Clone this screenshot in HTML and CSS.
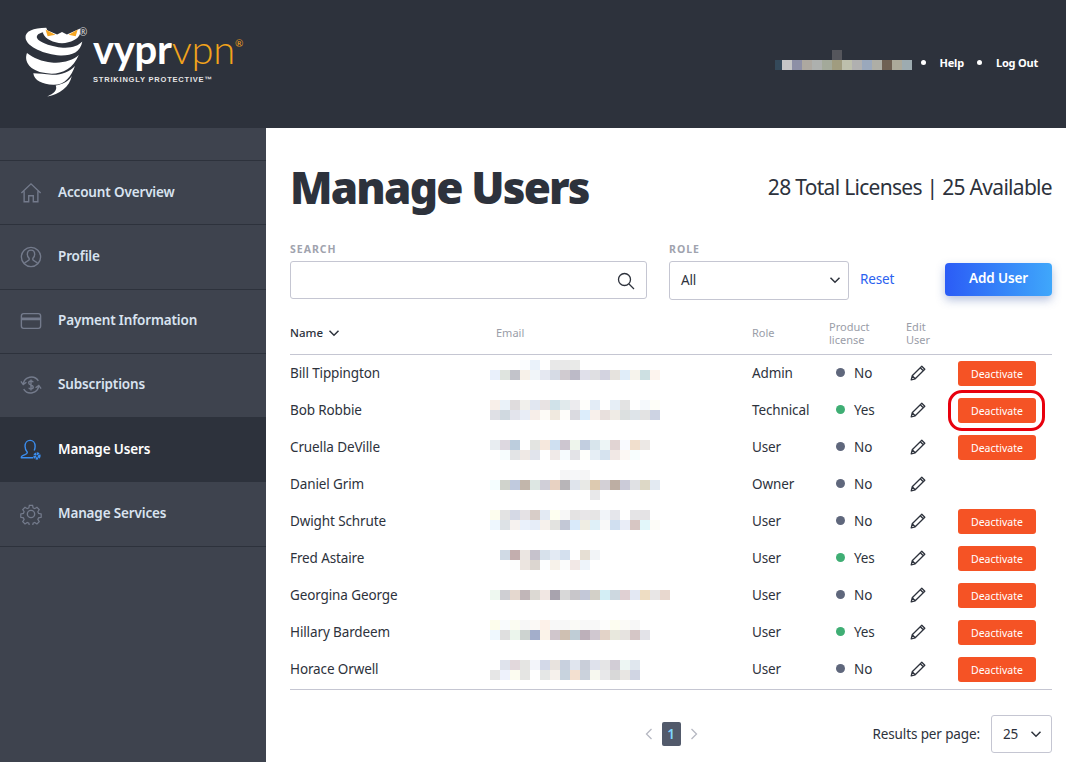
FILE: index.html
```html
<!DOCTYPE html>
<html lang="en">
<head>
    <meta charset="UTF-8">
    <meta name="viewport" content="width=device-width, initial-scale=1.0">
    <title>Manage Users</title>
    <link rel="stylesheet" href="styles.css">
</head>
<body>
    <svg class="sprites" aria-hidden="true">
        <symbol id="pencil" viewBox="0 0 16 16">
            <path d="M11.8 1.2l3 3L5.200 13.800l-4 1 1-4z M10.300 2.700l3 3 M2.200 10.800l3 3" fill="none" stroke="currentColor" stroke-width="1.300" stroke-linejoin="round"/>
        </symbol>
        <symbol id="chevron" viewBox="0 0 12 12">
            <path d="M1.500 3.800L6 8.200l4.500-4.400" fill="none" stroke="currentColor" stroke-width="1.500"/>
        </symbol>
    </svg>

    <header class="top-bar">
        <div class="logo">
            <svg class="logo-mark" viewBox="0 0 240 240">
                <path fill="#fff" d="M95 28C58 28 33 38 36 58c3 24 55 47 99 49 32 1 58-9 63-40-12 13-32 20-62 17-33-4-68-18-68-30 0-8 12-14 32-14z"/>
                <path fill="#fff" d="M40 100c-8 20 2 46 44 56 42 10 84-2 104-50-17 16-47 24-78 21-27-3-52-12-70-27z"/>
                <path fill="#fff" d="M58 158c2 20 26 32 57 33 32 1 52-24 62-54-15 17-40 26-65 25-21-1-38-4-54-4z"/>
                <path fill="#fff" d="M98 224c34-4 64-28 70-58-10 17-27 24-46 27 6 13-6 24-24 31z"/>
                <path fill="#fff" d="M86 30l40 17 14-7 14 7 38-17v14c-5 17-27 26-52 28-25-2-47-11-54-28z"/>
                <path fill="#f5a623" d="M93 33l28 15-22 4z M185 33l-26 15 20 4z"/>
            </svg>
            <span class="logo-reg">®</span>
            <div class="logo-words">
                <div class="logo-name">vypr<span class="logo-vpn">vpn</span><sup class="logo-sup">®</sup></div>
                <div class="logo-tag">STRIKINGLY PROTECTIVE™</div>
            </div>
        </div>
        <nav class="top-links">
            <div class="mosaic user-blur" id="userBlur"></div>
            <span class="dot"></span>
            <a href="#">Help</a>
            <span class="dot"></span>
            <a href="#">Log Out</a>
        </nav>
    </header>

    <div class="layout">
        <aside class="sidebar">
            <a class="side-item" href="#">
                <svg class="side-icon" viewBox="0 0 24 24"><path d="M1.500 12L12 2l10.500 10M4.500 10v11.500h5V15h5v6.500h5V10"/></svg>
                Account Overview
            </a>
            <a class="side-item" href="#">
                <svg class="side-icon" viewBox="0 0 24 24"><circle cx="12" cy="12" r="10.500"/><path d="M4.500 19.500c1-3 5-3 5.500-4.500v-1.500c-1.500-1-2-2.500-2-4.500 0-3 1.800-4.500 4-4.500s4 1.500 4 4.500c0 2-.5 3.500-2 4.500V15c.5 1.500 4.500 1.500 5.500 4.500"/></svg>
                Profile
            </a>
            <a class="side-item" href="#">
                <svg class="side-icon" viewBox="0 0 24 24"><rect x="1.500" y="4" width="21" height="16" rx="2.500"/><path d="M1.500 9h21M1.500 10.500h21"/></svg>
                Payment Information
            </a>
            <a class="side-item" href="#">
                <svg class="side-icon" viewBox="0 0 24 24"><path d="M3.500 11A9 9 0 0 1 20 7.500M20.500 13A9 9 0 0 1 4 16.500M1 8l2.500 3.500L7 9M17 15l3.500-2.500L23 16"/><path d="M14.500 9c-.5-1-1.500-1.300-2.500-1.300-1.500 0-2.500.8-2.500 2s1 1.800 2.500 2.300 2.500 1 2.500 2.300-1 2-2.500 2c-1 0-2-.4-2.500-1.300M12 6v12"/></svg>
                Subscriptions
            </a>
            <a class="side-item active" href="#">
                <svg class="side-icon" viewBox="0 0 24 24"><path d="M14.500 20.500H1.500c-.5-1.500 1-2.500 4-3.500 1.500-.5 2.500-1 2.500-2.500-1.500-1.500-2.500-3.500-2.500-6.500C5.500 4 8 1.500 11 1.500s5.500 2.500 5.500 6.500c0 1.500-.3 3-1 4.500"/><circle cx="18.500" cy="18.500" r="2.500" stroke-width="3" stroke-dasharray="2 .6"/></svg>
                Manage Users
            </a>
            <a class="side-item" href="#">
                <svg class="side-icon" viewBox="0 0 24 24"><circle cx="12" cy="12" r="4"/><path d="M10 1.500h4l.6 3.100 2 .9 2.700-1.700 2.800 2.800-1.700 2.700.9 2 3.200.7v4l-3.200.7-.9 2 1.700 2.700-2.800 2.800-2.700-1.700-2 .9-.6 3.100h-4l-.6-3.100-2-.9-2.700 1.700-2.800-2.800 1.700-2.700-.9-2-3.200-.7v-4l3.200-.7.9-2-1.700-2.700 2.800-2.800 2.700 1.700 2-.9z" transform="translate(1.300 1.300) scale(.89)"/></svg>
                Manage Services
            </a>
        </aside>

        <main class="content">
            <div class="title-row">
                <h1>Manage Users</h1>
                <div class="licenses">28 Total Licenses | 25 Available</div>
            </div>

            <div class="filters">
                <div class="field search-field">
                    <label>SEARCH</label>
                    <div class="control">
                        <svg class="search-icon" viewBox="0 0 18 18"><circle cx="7.500" cy="7.500" r="6"/><path d="M12 12l5 5"/></svg>
                    </div>
                </div>
                <div class="field role-field">
                    <label>ROLE</label>
                    <div class="control select">All<svg class="chev"><use href="#chevron"/></svg></div>
                </div>
                <a class="reset" href="#">Reset</a>
                <button class="add-user">Add User</button>
            </div>

            <div class="table-head">
                <div class="name-head">Name <svg class="chev"><use href="#chevron"/></svg></div>
                <div>Email</div>
                <div>Role</div>
                <div>Product<br>license</div>
                <div>Edit<br>User</div>
                <div></div>
            </div>

            <div class="rows">
                <div class="mosaic email-blur" id="emailBlur"></div>
                <div class="row">
                    <div>Bill Tippington</div><div></div><div>Admin</div>
                    <div class="license"><span class="bullet"></span>No</div>
                    <div><svg class="pencil"><use href="#pencil"/></svg></div>
                    <div><button class="deactivate">Deactivate</button></div>
                </div>
                <div class="row">
                    <div>Bob Robbie</div><div></div><div>Technical</div>
                    <div class="license"><span class="bullet on"></span>Yes</div>
                    <div><svg class="pencil"><use href="#pencil"/></svg></div>
                    <div class="marked"><button class="deactivate">Deactivate</button><span class="callout"></span></div>
                </div>
                <div class="row">
                    <div>Cruella DeVille</div><div></div><div>User</div>
                    <div class="license"><span class="bullet"></span>No</div>
                    <div><svg class="pencil"><use href="#pencil"/></svg></div>
                    <div><button class="deactivate">Deactivate</button></div>
                </div>
                <div class="row">
                    <div>Daniel Grim</div><div></div><div>Owner</div>
                    <div class="license"><span class="bullet"></span>No</div>
                    <div><svg class="pencil"><use href="#pencil"/></svg></div>
                    <div></div>
                </div>
                <div class="row">
                    <div>Dwight Schrute</div><div></div><div>User</div>
                    <div class="license"><span class="bullet"></span>No</div>
                    <div><svg class="pencil"><use href="#pencil"/></svg></div>
                    <div><button class="deactivate">Deactivate</button></div>
                </div>
                <div class="row">
                    <div>Fred Astaire</div><div></div><div>User</div>
                    <div class="license"><span class="bullet on"></span>Yes</div>
                    <div><svg class="pencil"><use href="#pencil"/></svg></div>
                    <div><button class="deactivate">Deactivate</button></div>
                </div>
                <div class="row">
                    <div>Georgina George</div><div></div><div>User</div>
                    <div class="license"><span class="bullet"></span>No</div>
                    <div><svg class="pencil"><use href="#pencil"/></svg></div>
                    <div><button class="deactivate">Deactivate</button></div>
                </div>
                <div class="row">
                    <div>Hillary Bardeem</div><div></div><div>User</div>
                    <div class="license"><span class="bullet on"></span>Yes</div>
                    <div><svg class="pencil"><use href="#pencil"/></svg></div>
                    <div><button class="deactivate">Deactivate</button></div>
                </div>
                <div class="row">
                    <div>Horace Orwell</div><div></div><div>User</div>
                    <div class="license"><span class="bullet"></span>No</div>
                    <div><svg class="pencil"><use href="#pencil"/></svg></div>
                    <div><button class="deactivate">Deactivate</button></div>
                </div>
            </div>

            <div class="table-foot">
                <div></div>
                <div class="pager">
                    <svg class="page-arrow" viewBox="0 0 8 12"><path d="M6.500 1L1.500 6l5 5"/></svg>
                    <span class="page-num">1</span>
                    <svg class="page-arrow" viewBox="0 0 8 12"><path d="M1.500 1l5 5-5 5"/></svg>
                </div>
                <div class="per-page">
                    Results per page:
                    <div class="control select small">25<svg class="chev"><use href="#chevron"/></svg></div>
                </div>
            </div>
        </main>
    </div>

    <script src="script.js"></script>
</body>
</html>
```

FILE: styles.css
```css
html, body {
    margin: 0;
    padding: 0;
    height: 100%;
    overflow: hidden;
}
body {
    font-family: "Noto Sans", "Open Sans", sans-serif;
    font-size: 13.500px;
    letter-spacing: -0.12px;
    color: #2d323c;
    background: #fff;
}
.sprites {
    display: none;
}

/* top bar */
.top-bar {
    height: 128px;
    background: #2d323c;
    display: flex;
    justify-content: space-between;
    align-items: flex-start;
}
.logo {
    display: flex;
    position: relative;
    padding: 18px 0 0 13px;
}
.logo-mark {
    width: 84px;
    height: 84px;
    flex: none;
}
.logo-reg {
    position: absolute;
    left: 79px;
    top: 27px;
    color: #d8d8d8;
    font-size: 10px;
    line-height: 10px;
}
.logo-words {
    margin-left: -4px;
    padding-top: 11px;
}
.logo-name {
    font-family: "Lato", sans-serif;
    font-size: 40px;
    font-weight: 700;
    line-height: 40px;
    color: #fff;
    letter-spacing: -0.3px;
    white-space: nowrap;
}
.logo-vpn {
    font-weight: 300;
    color: #f2a31b;
}
.logo-sup {
    font-size: 10px;
    font-weight: 400;
    color: #f2a31b;
    vertical-align: 17px;
    line-height: 0;
}
.logo-tag {
    font-family: "Liberation Sans", sans-serif;
    font-size: 7.500px;
    font-weight: 700;
    letter-spacing: 0.8px;
    color: #e6e6e6;
    margin-top: 6px;
    white-space: nowrap;
}
.top-links {
    display: flex;
    align-items: flex-start;
    padding: 50px 28px 0 0;
}
.top-links a {
    color: #fff;
    font-size: 11px;
    font-weight: 700;
    letter-spacing: -0.2px;
    line-height: 26px;
    text-decoration: none;
}
.dot {
    width: 5px;
    height: 5px;
    margin: 10px 13.500px 0;
    border-radius: 50%;
    background: #fff;
}
.mosaic {
    display: grid;
}
.user-blur {
    grid-template-columns: 7px repeat(13, 10px);
    grid-auto-rows: 10px;
    margin-right: -4px;
}

/* sidebar */
.layout {
    display: flex;
    height: 634px;
}
.sidebar {
    width: 266px;
    flex: none;
    background: #3e434e;
    padding-top: 32px;
    box-sizing: border-box;
}
.side-item {
    display: flex;
    align-items: center;
    height: 64.250px;
    box-sizing: border-box;
    padding: 0 0 2px 19.500px;
    border-top: 1px solid #2d323c;
    color: #d9e3f0;
    font-size: 13.500px;
    font-weight: 600;
    letter-spacing: -0.15px;
    text-decoration: none;
}
.side-item:last-child {
    border-bottom: 1px solid #2d323c;
    height: 65.250px;
}
.side-item.active {
    background: #2d323c;
    color: #fff;
}
.side-icon {
    width: 22px;
    height: 22px;
    margin: 2px 16.500px 0 0;
    flex: none;
    fill: none;
    stroke: #747b8c;
    stroke-width: 1.500;
}
.side-item.active .side-icon {
    stroke: #3b8ef0;
}

/* main area */
.content {
    flex: 1;
    padding: 29px 14px 0 24px;
}
.title-row {
    display: flex;
    justify-content: space-between;
    align-items: center;
    height: 60px;
}
h1 {
    margin: 0;
    font-size: 44px;
    font-weight: 900;
    letter-spacing: -1.800px;
    line-height: 60px;
    color: #2d323c;
}
.licenses {
    font-size: 21px;
    letter-spacing: -0.700px;
}
.filters {
    display: flex;
    align-items: flex-start;
    margin-top: 26px;
}
.field label {
    display: block;
    height: 12px;
    margin-bottom: 6px;
    font-size: 10.500px;
    line-height: 12px;
    font-weight: 700;
    letter-spacing: 1px;
    color: #a0a3ae;
}
.control {
    display: flex;
    align-items: center;
    height: 38px;
    box-sizing: border-box;
    background: #fff;
    border: 1px solid #c5c6d2;
    border-radius: 3px;
}
.search-field {
    width: 357px;
}
.search-icon {
    width: 18px;
    height: 18px;
    margin: 2px 11px 0 auto;
    fill: none;
    stroke: #2d323c;
    stroke-width: 1.300;
}
.role-field {
    width: 180px;
    margin-left: 22px;
}
.role-field .control {
    height: 39px;
    padding-bottom: 2px;
}
.select {
    justify-content: space-between;
    padding: 0 7px 0 11px;
}
.chev {
    width: 12px;
    height: 12px;
    color: #2d323c;
}
.reset {
    margin: 26px 0 0 11px;
    color: #2a62f0;
    font-size: 13.500px;
    line-height: 20px;
    text-decoration: none;
}
.add-user {
    margin: 20px 0 0 auto;
    width: 107px;
    height: 33px;
    padding: 0 0 4px;
    border: none;
    border-radius: 4px;
    background: linear-gradient(90deg, #2b5cf6, #3fa7fb);
    box-shadow: 0 4px 10px rgba(50, 80, 160, 0.35);
    color: #fff;
    font-family: inherit;
    font-size: 13.500px;
    letter-spacing: -0.1px;
    font-weight: 600;
}

/* user table */
.table-head, .row {
    display: grid;
    grid-template-columns: 206px 256px 77px 77px 52px 94px;
    align-items: center;
}
.table-head {
    height: 43px;
    margin-top: 12px;
    box-sizing: border-box;
    font-size: 11px;
    letter-spacing: 0;
    line-height: 13px;
    color: #9a9da8;
    border-bottom: 1px solid #c5c6d2;
    padding-bottom: 1px;
}
.name-head {
    color: #2d323c;
    font-size: 11.500px;
    font-weight: 500;
    display: flex;
    align-items: center;
    gap: 5px;
}
.rows {
    position: relative;
    padding-bottom: 1px;
    border-bottom: 1px solid #c5c6d2;
}
.email-blur {
    position: absolute;
    left: 200px;
    top: 5px;
    grid-template-columns: repeat(18, 10px);
    grid-auto-rows: 10px;
}
.row {
    height: 37px;
}
.row > div:not(:last-child) {
    margin-bottom: 2px;
}
.license {
    display: flex;
    align-items: center;
    padding-left: 7px;
}
.bullet {
    width: 9px;
    height: 9px;
    margin-right: 9px;
    border-radius: 50%;
    background: #5f677c;
}
.bullet.on {
    background: #3fae74;
}
.pencil {
    display: block;
    width: 16px;
    height: 16px;
    margin-left: 4px;
    color: #2d323c;
}
.deactivate {
    display: block;
    width: 78px;
    height: 25px;
    padding: 0;
    border: none;
    border-radius: 3px;
    background: #f55325;
    color: #fff;
    font-family: inherit;
    font-size: 10.500px;
}
.marked {
    position: relative;
}
.callout {
    position: absolute;
    left: -10px;
    top: -8px;
    width: 97px;
    height: 41px;
    box-sizing: border-box;
    border: 3px solid #e8000d;
    border-radius: 14px;
}
.table-foot {
    display: grid;
    grid-template-columns: 1fr auto 1fr;
    align-items: center;
    margin-top: 25px;
}
.pager {
    display: flex;
    align-items: center;
    gap: 9px;
}
.page-arrow {
    width: 8px;
    height: 12px;
    fill: none;
    stroke: #b6b8c2;
    stroke-width: 1.300;
}
.page-num {
    width: 19px;
    height: 24px;
    border-radius: 2px;
    background: #525a6b;
    color: #7fd6ff;
    font-weight: 600;
    text-align: center;
    line-height: 24px;
}
.per-page {
    display: flex;
    align-items: center;
    justify-content: flex-end;
    gap: 11px;
}
.select.small {
    width: 61px;
    padding: 0 9px 0 11px;
}
```

FILE: script.js
```js
// Redacted blocks are drawn as mosaics of flat cells, one string per line of cells
const userLines = [
    ',,,,,,55565c',
    '34495a,c5c5c6,8d8fa6,ada8a0,adb0ae,a3a99a,a09c7f,bdbfac,b0b0b0,9aa8bc,aeaea6,6f6053,aca99a,9dabb0'
];

const emailLines = {
    0: ',,,fbfdff,eaf2fa,,e8e8e8,e8e8e8,e9eae8',
    1: 'e9f0fb,dfe4df,c2c3ca,f7f1e9,f1f5f9,e5e8f1,d6dbe5,d0cbd0,bcbac7,e0e0ea,dfdfe2,d3d3e0,e6e3de,e0edf9,f6f3ec,cde0e2,fdf4ee',
    4: 'f8efe9,eaf2f9,dfdcdd,f1f0ec,e1e7f1,e8e3e3,d0e2e9,e1eaec,ecebee,fefefb,e3ecf6,,e6eef6,e3e3e3,,f5f9fc,fefef8',
    5: 'dfe0e5,d0d9e0,e3e4ec,e8edf6,f7eee9,fdfbf7,f0e9df,fefdfa,dadae0,dcedfb,f8f0eb,e8e0dd,efebe5,dce0e0,dee4e9,e3e3e3,cdd3e3',
    8: 'e8edf1,ddd8e0,bccddd,,e3e4e1,f6e8dd,cfe0f1,cdc6d0,eef5ec,c2cee0,d8e5ec,edf5f6,e1d4d3,f9faff,f1dfcd,ece8e5',
    9: ',f7fdfe,e3e4e6,efe9e5,e1e4ec,,f0eae8,f6fbfe,e3e3e7,fefffb,e6eef5,d6e3ef,f1e8e5,fcf8f4,f8fefe',
    11: ',,,,,,,f5f5f6,f6f7f9,f5f5f6',
    12: 'f5feff,d0d3cc,c0cade,c2b6ab,dde7e3,d0cfd8,e8d2c2,b8b5b8,dfe4ec,e8e9e6,ddcab0,d3d0d6,bdaea3,cbcbd8,e0e1e4,ddd8c6,e3eaf2',
    13: ',,,,,,,,,,e8e8ea',
    15: 'fdfdee,e3e3e3,d5d9e5,e5e2e5,d8cdc8,e3eaf3,fefff0,f7f7f7,e4e3e3,e8e6e8,e6e5e5,f1f4f9,e5e6eb,,e5e4e6,e4e3e5',
    16: 'eef7fe,dde2e6,f6f2ef,eaf1fb,e6edf8,f6f1ec,e3e3e0,c3c8d6,d9eafa,efede3,dff0f8,f9f9f9,d0dff0,e9edf7,d7c6c3,e2f7fa,fdfcf8',
    19: ',d0dae5,c3aeae,ebe6e2,c6c2cc,d7e1eb,e3eaf3,d4e0ee,,e6dfd4,f2f4f7',
    20: ',,fcfdfd,ece5e0,dcd6d0,fcfeff,f7f2ea,fbfcfc,f2e8e6,eef4fa',
    23: 'eef8f0,cfcfd3,e5d8cf,c1b6b8,dcd9d3,f1e7e3,a8a3ae,d8d8d8,c8c6ca,c3c8d8,d3d0c8,d3eef5,cdd8e0,e0d0d3,e3e8f3,eeddc3,e8e6e6,e8d8cf',
    26: 'fdfdec,f9fbfd,fbfcf2,f7f7f7,fbf9f6,fdf1e9,f8f8f8,f7f7f7,fafaf6,f8f8f8,f8f8f8,fdfdfc,fdfdf0,fbfaf7,f7f7f7',
    27: 'eff8fe,dfdfdf,ebf5ec,cdd3d0,a3aecb,fbf3e9,d0c6cc,cfc0b2,bfcdd6,bdb0ba,d0c8d0,e3d3c8,e8e8dd,e6e3e0,d5c6c6,e3e3e8',
    30: ',dfe3ec,e2d8dc,e5e5e3,f3f5fa,d3d9e8,e8e3de,c8d0de,e0e5ee,c9ced9,dfe2ec,e5e5e6,d2cdd6,edf6f3,e0e7ee',
    31: 'e6e6e6,eef2fc,fcfcf0,e5e5e3,,e5e7e6,f6f1ec,c8d3de,f3e0d0,cbd2dc,f7f8ef,e8e8ea,d8d8d8,e8e6e3,d0d5e3'
};

function fillMosaic(box, lines, count, columns) {
    for (let y = 0; y < count; y++) {
        const colors = (lines[y] || '').split(',');
        for (let x = 0; x < columns; x++) {
            const cell = document.createElement('span');
            if (colors[x]) cell.style.background = '#' + colors[x];
            box.appendChild(cell);
        }
    }
}

fillMosaic(document.getElementById('userBlur'), userLines, 2, 14);
fillMosaic(document.getElementById('emailBlur'), emailLines, 32, 18);
```
